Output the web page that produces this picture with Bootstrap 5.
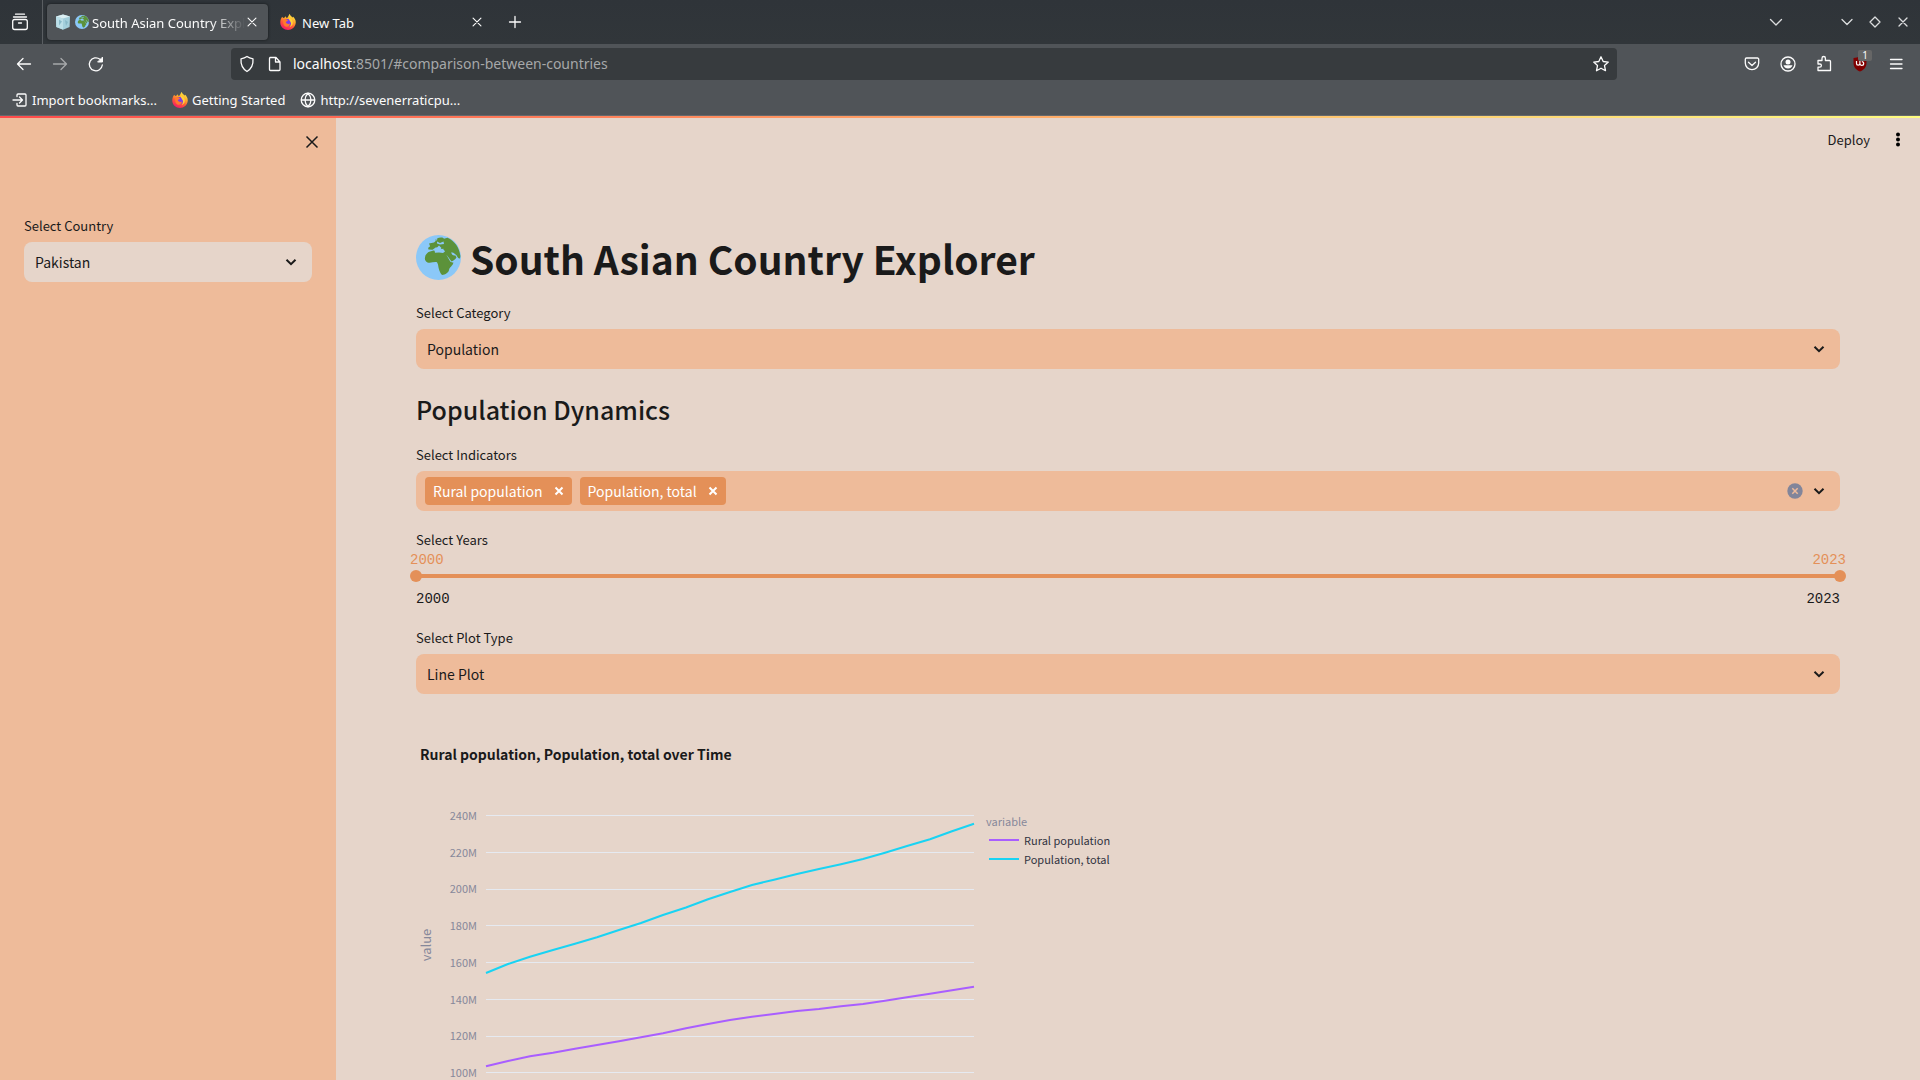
<!DOCTYPE html>
<html lang="en">
<head>
<meta charset="utf-8">
<meta name="viewport" content="width=device-width, initial-scale=1">
<title>South Asian Country Explorer</title>
<link href="https://cdn.jsdelivr.net/npm/bootstrap@5.3.0/dist/css/bootstrap.min.css" rel="stylesheet">
<style>
:root{--panel:#eebb9a;--page:#e6d5ca;--accent:#e49058;--ink:#1a1a1a;--ui:"Noto Sans",sans-serif;--app:"Noto Sans CJK SC","Source Sans Pro",sans-serif}
body{height:100vh;background:var(--page);color:var(--ink);font-family:var(--app);font-size:14px;line-height:20px}
svg{display:block;flex:none}
button.plain{border:0;background:none;padding:0;color:inherit;display:flex;align-items:center;justify-content:center}
.browser{font-family:var(--ui);font-size:13px;color:#fcfcfc}
.browser svg.line{fill:none;stroke:currentColor;stroke-width:1.3;stroke-linecap:round;stroke-linejoin:round}
.tabstrip{height:44px;background:linear-gradient(#2f3439,#31363a)}
.viewtabs{width:43px;border-right:1px solid #5a5e62;padding-left:11px}
.tab-item{height:36px;border-radius:4px;padding:0 9px 0 8px}
.tab-on{width:221px;background:#505458;box-shadow:0 0 3px #15181a;margin:0 4px}
.tab-off{width:221px}
.tab-title{white-space:nowrap;overflow:hidden;line-height:36px;margin:2px 0 0 6px}
.tab-fade{-webkit-mask-image:linear-gradient(to left,transparent,#000 34px);margin-left:3px}
.new-tab{margin-left:13px}
.tab-list{margin-right:53px}
.winctl{color:#dcdedf}
.navrow{height:40px;background:#505458}
.navleft{width:231px;padding-left:14px;gap:16px}
.addr{height:32px;background:#373b3e;border-radius:4px;padding:0 7px 0 8px;gap:10px}
.addr .addr-text{color:#a6a8a9;font-size:14px}
.addr-host{color:#fcfcfc}
.navright{width:303px;padding:0 14px 0 0;gap:16px}
.bookrow{height:32px;background:#505458;border-bottom:1px solid #66696c;padding:0 12px;gap:15px}
.bookrow a{color:inherit;text-decoration:none;gap:4px}
.ub-count{position:absolute;left:8px;top:-4px;background:#666;font-size:10px;line-height:11px;width:14px;border-radius:2px;text-align:center}
.decoration{height:2px;background:linear-gradient(90deg,#ff4b4b,#fffd80)}
.side{width:336px;background:var(--panel);padding:0 24px}
.side-top{height:98px;padding-top:17px;margin-right:-7px}
.main-pad{padding:70px 80px 0}
.topbar{height:44px;padding:0 13px;gap:19px;font-size:13px}
.topbar button{line-height:44px}
.app-label{display:block;font-size:13px;line-height:20px;margin-bottom:6px}
select.app-select,.multi{height:40px;border:0;border-radius:8px;font-size:14px;line-height:24px;color:var(--ink)}
select.app-select{background-color:var(--panel);padding:0 40px 0 11px;background-size:20px 20px;background-position:right 11px center;
background-image:url("data:image/svg+xml,%3Csvg xmlns='http://www.w3.org/2000/svg' viewBox='0 0 20 20'%3E%3Cpath d='M5.5 7.7l4.5 4.4 4.5-4.4' fill='none' stroke='%231a1a1a' stroke-width='2'/%3E%3C/svg%3E")}
.side select.app-select{background-color:var(--page)}
h1.app-title{font-size:39px;line-height:52px;font-weight:700;gap:9px;margin-bottom:19px}
h3.app-sub{font-size:25px;line-height:32px;font-weight:500;margin:24px 0 20px}
.multi{background:var(--panel);padding:0 11px 0 9px;gap:8px}
.multi-tools{gap:6px}
.chip{height:28px;background:var(--accent);border-radius:4px;color:#fff;padding:0 8px;gap:11px}
.mono{font-family:"Liberation Mono",monospace;font-size:14px;line-height:20px}
.yearbox{margin:19px 0}
.years{margin:0 -6px 7px}
.now-values{color:var(--accent)}
.rail{position:relative;height:12px}
.rail::before{content:"";position:absolute;left:6px;right:6px;top:4px;height:4px;background:var(--accent)}
.rail input{position:absolute;left:0;top:0;width:100%;height:12px;margin:0;appearance:none;-webkit-appearance:none;background:none;pointer-events:none}
.rail input::-webkit-slider-thumb{-webkit-appearance:none;width:12px;height:12px;border-radius:50%;background:var(--accent);pointer-events:auto}
.chart{margin-top:16px}
.chart text{font-family:var(--app);font-size:11px;fill:#86889a}
.chart .plot-title{font-size:14px;font-weight:700;fill:var(--ink)}
.chart .axis-name{font-size:13px}
.chart .legend-name{fill:#31333f}
.chart polyline,.chart .key{fill:none;stroke-width:2}
</style>
<script src="https://cdn.jsdelivr.net/npm/bootstrap@5.3.0/dist/js/bootstrap.bundle.min.js"></script>
</head>
<body class="d-flex flex-column overflow-hidden">

<svg width="0" height="0" class="position-absolute" aria-hidden="true">
<defs>
<linearGradient id="flame" x1="0.8" y1="0" x2="0.3" y2="1"><stop offset="0" stop-color="#fff44f"/><stop offset=".35" stop-color="#ffb02a"/><stop offset=".65" stop-color="#ff5a36"/><stop offset="1" stop-color="#f5156c"/></linearGradient>
<symbol id="fox" viewBox="0 0 16 16"><path d="M2.200 2.800C2.600 3.600 3 3.800 3.600 3.900 4.400 3.400 5 3.500 5.200 2.200c.8.6 1.300 1.200 1.600 2C8 3.600 8.400 1.600 9.800-.2c.3 1.900 1.800 2.700 2.800 3.800.5-.1.4-.6.3-1C15 4.500 16 6.600 15.700 9 15.300 13 12 16 8 16S.5 12.900.3 9C.2 6.600.8 4.600 2.200 2.800z" fill="url(#flame)"/><circle cx="7.600" cy="8.600" r="3.600" fill="#7b3bea"/><path d="M9 3.500c2.500 1 4 3 3.800 5.500-.1 2-1.500 3.600-3 4.200 1.300-2 1.700-3.700.6-5.400C9.500 6.400 8.500 5.500 9 3.500z" fill="#ffd23a"/><path d="M3.500 5.500c1.500-.6 3.500-.1 4.500 1-.5.800-1.800.8-2.200 1.700.8 1.700 2.700 2.100 4.300 1.300-.5 2.600-2.600 4-4.700 3C3.500 11.500 2.600 8 3.500 5.500z" fill="#ff7a2c"/></symbol>
<symbol id="earth" viewBox="0 0 45 45"><circle cx="22.500" cy="22.500" r="22.500" fill="#8bc8f8"/><path d="M19.500 6.500c.3-2.500 2.500-4 5.500-4 1.500 0 2.500.3 3 1.200l3.500-1c7 3 12 10 12.800 17.800.2 1 0 2-.4 3-1.500.3-2.400-1.200-3.400-3.200l-2.500-2c-.6-1-1.800-.8-3-.7l1.500 2.500c1.500.7 2 .5 2.600.2l1.400 1.900c-1 2.300-2.800 3-5 4.300l-3.300-4.500-2-2.500 4 7c1 1 2 .9 3.200 1-.5 3.200-4 4.700-4.400 7.500-.3 2.500-3.500 4.700-7 5-2-2-3.500-6-4-10.500l-1-2.300c-3-.6-6 1-9.500.2-2-1-3-2.700-2.500-5 .2-2.300 1.500-4 3.500-5.500l5-1.400 6 1.200 4-.8v-2.200l-4 .6c-1.500 0-1.500-1.500-3.500-2l-3.500 2.500-4-.2c-.8-1.700.2-2.700 1.700-3l-1.200-3 5-1.200 3.500-2.800c-1-.3-1-.6-2 .1z" fill="#5c923a"/><path d="M18.500 15.500l2-2.500 2.500-2.500 2.500 2.500-1 1.500 3.500.5 1 1.500-2 1.500-4-.5-4 .3zM21 6.500l3 1.500 3.500-1.500.5 2.500-4 .5-3-1z" fill="#8bc8f8"/></symbol>
<symbol id="cross" viewBox="0 0 16 16"><path d="M3.500 3.500l9 9m0-9l-9 9"/></symbol>
</defs>
</svg>

<header class="browser">
  <div class="tabstrip d-flex align-items-center">
    <div class="viewtabs d-flex align-items-center align-self-stretch">
      <button class="plain" aria-label="Recent browsing"><svg class="line" width="18" height="18" viewBox="0 0 18 18"><rect x="1.700" y="6.500" width="14.600" height="10" rx="2"/><path d="M2.500 4h13M4.500 1.200h9M7.500 10h3"/></svg></button>
    </div>
    <div class="tab-item tab-on d-flex align-items-center">
      <svg width="16" height="16" viewBox="0 0 16 16"><path d="M1 2.500L8 .5l7 2-.4 10.500L8 15.700 1.300 13z" fill="#a4cfdc"/><path d="M1 2.500L8 4.500l7-2L8 .5z" fill="#dceff3"/><path d="M8 4.500v11L1.300 13 1 2.500z" fill="#bcdfe8"/><path d="M4 5.500l3 2-3 4zM10 6l3 2-2 4z" fill="#88b9c8"/></svg>
      <svg class="ms-1" width="14" height="14"><use href="#earth"/></svg>
      <span class="tab-title tab-fade flex-fill">South Asian Country Explorer</span>
      <button class="plain" aria-label="Close tab"><svg class="line" width="14" height="14"><use href="#cross"/></svg></button>
    </div>
    <div class="tab-item tab-off d-flex align-items-center">
      <svg width="16" height="16"><use href="#fox"/></svg>
      <span class="tab-title flex-fill">New Tab</span>
      <button class="plain" aria-label="Close tab"><svg class="line" width="14" height="14"><use href="#cross"/></svg></button>
    </div>
    <button class="plain new-tab" aria-label="New tab"><svg class="line" width="18" height="18" viewBox="0 0 18 18"><path d="M9 3.500v11M3.500 9h11"/></svg></button>
    <div class="winctl d-flex align-items-center ms-auto pe-2">
      <button class="plain tab-list" aria-label="List all tabs"><svg class="line" width="18" height="18" viewBox="0 0 18 18"><path d="M3.500 6.500L9 12l5.500-5.500"/></svg></button>
      <button class="plain" aria-label="Minimize"><svg class="line" width="18" height="18" viewBox="0 0 18 18"><path d="M4 6.500l5 5 5-5"/></svg></button>
      <button class="plain mx-2 px-1" aria-label="Maximize"><svg class="line" width="14" height="14" viewBox="0 0 14 14"><path d="M7 2l5 5-5 5-5-5z"/></svg></button>
      <button class="plain" aria-label="Close"><svg class="line" width="18" height="18" viewBox="0 0 18 18"><path d="M5 5l8 8m0-8l-8 8"/></svg></button>
    </div>
  </div>

  <nav class="navrow d-flex align-items-center">
    <div class="navleft d-flex align-items-center">
      <button class="plain" aria-label="Back"><svg class="line" width="20" height="20" viewBox="0 0 20 20"><path d="M16.500 10H4m5-5.500L3.500 10 9 15.500"/></svg></button>
      <button class="plain" aria-label="Forward" disabled><svg class="line opacity-50" width="20" height="20" viewBox="0 0 20 20"><path d="M3.500 10H16m-5-5.500l5.500 5.500-5.500 5.500"/></svg></button>
      <button class="plain" aria-label="Reload"><svg class="line" width="20" height="20" viewBox="0 0 20 20"><path d="M16.300 11A6.500 6.500 0 1 1 14 5.300l2 2"/><path d="M16.500 3.500V8H12z" fill="currentColor" stroke-width="1"/></svg></button>
    </div>
    <div class="addr d-flex align-items-center flex-fill">
      <svg class="line" width="16" height="18" viewBox="0 0 16 18"><path d="M8 1.500c2 1.500 4 2 6 2.300.4 5.700-1.500 10-6 12.700C3.500 13.800 1.600 9.500 2 3.800c2-.3 4-.8 6-2.300z"/></svg>
      <svg class="line" width="18" height="18" viewBox="0 0 18 18"><path d="M5 2.500h6L15 7v7.500a1 1 0 0 1-1 1H5.500a1 1 0 0 1-1-1v-11a1 1 0 0 1 1-1zM10.500 2.500V7H15"/></svg>
      <span class="addr-text flex-fill"><span class="addr-host">localhost</span>:8501/#comparison-between-countries</span>
      <button class="plain" aria-label="Bookmark this page"><svg class="line" width="18" height="18" viewBox="0 0 18 18"><path d="M9 1.800l2.200 4.700 5.100.6-3.800 3.500 1 5.100L9 13.200l-4.500 2.500 1-5.100L1.700 7.100l5.100-.6z"/></svg></button>
    </div>
    <div class="navright d-flex align-items-center justify-content-end">
      <button class="plain" aria-label="Pocket"><svg class="line" width="20" height="20" viewBox="0 0 20 20"><path d="M4.500 4h11a1.200 1.200 0 0 1 1.200 1.200V9a6.700 6.700 0 0 1-13.400 0V5.200A1.200 1.200 0 0 1 4.500 4zM6.500 8.200l3.500 3.300 3.500-3.300"/></svg></button>
      <button class="plain" aria-label="Account"><svg class="line" width="20" height="20" viewBox="0 0 20 20"><circle cx="10" cy="10" r="7"/><circle cx="10" cy="8" r="2.500" fill="currentColor" stroke="none"/><path d="M5.500 11.300h9c-.8 2.300-2.400 3.300-4.500 3.300s-3.700-1-4.500-3.300z" fill="currentColor" stroke="none"/></svg></button>
      <button class="plain" aria-label="Extensions"><svg class="line" width="20" height="20" viewBox="0 0 20 20"><path d="M4 10V6.500h4V4.200a1.700 1.700 0 0 1 3.400 0v2.300h4.100a1 1 0 0 1 1 1v9H4v-3.300h1.800a1.600 1.600 0 0 0 0-3.200z"/></svg></button>
      <button class="plain position-relative" aria-label="uBlock Origin"><svg width="20" height="20" viewBox="0 0 20 20"><path d="M10 2c2 1.500 4.500 1.500 6.500 2v5c0 4.500-3 7-6.500 8.500C6.500 16 3.500 13.500 3.500 9V4c2-.5 4.500-.5 6.500-2z" fill="#800000"/><path d="M6.500 7v2.500a1.700 1.700 0 0 0 3.400 0V7m0 2.500a1.900 1.900 0 1 0 1.900-1.900" fill="none" stroke="#fff" stroke-width="1.200"/></svg><span class="ub-count">1</span></button>
      <button class="plain" aria-label="Menu"><svg class="line" width="20" height="20" viewBox="0 0 20 20"><path d="M4.500 5.500h11.500M4.500 10H16M4.500 14.500H16"/></svg></button>
    </div>
  </nav>

  <nav class="bookrow d-flex align-items-center">
    <a href="#" class="d-flex align-items-center"><svg class="line" width="16" height="16" viewBox="0 0 16 16"><path d="M5 4.500V3a1 1 0 0 1 1-1h7a1 1 0 0 1 1 1v10a1 1 0 0 1-1 1H6a1 1 0 0 1-1-1v-1.500M1 8h9M7.500 5l3 3-3 3"/></svg>Import bookmarks...</a>
    <a href="#" class="d-flex align-items-center"><svg width="16" height="16"><use href="#fox"/></svg>Getting Started</a>
    <a href="#" class="d-flex align-items-center"><svg class="line" width="16" height="16" viewBox="0 0 16 16"><circle cx="8" cy="8" r="6.800"/><path d="M1.500 8h13M8 1.200c-4 4-4 9.600 0 13.600M8 1.200c4 4 4 9.600 0 13.600"/></svg>http://sevenerraticpu...</a>
  </nav>
</header>
<div class="decoration"></div>

<div class="d-flex flex-fill overflow-hidden">
  <aside class="side flex-shrink-0">
    <div class="side-top d-flex justify-content-end align-items-start">
      <button class="plain" aria-label="Close sidebar"><svg width="14" height="14" viewBox="0 0 14 14"><path d="M1.500 1.500l11 11m0-11l-11 11" stroke="#1a1a1a" stroke-width="1.500"/></svg></button>
    </div>
    <label class="app-label" for="country">Select Country</label>
    <select class="form-select app-select" id="country"><option>Pakistan</option></select>
  </aside>

  <main class="flex-fill">
    <div class="topbar d-flex justify-content-end align-items-center">
      <button class="plain">Deploy</button>
      <button class="plain" aria-label="Main menu"><svg width="18" height="18" viewBox="0 0 18 18"><circle cx="9" cy="3.500" r="2"/><circle cx="9" cy="8.500" r="2"/><circle cx="9" cy="13.500" r="2"/></svg></button>
    </div>
    <div class="main-pad">
      <h1 class="app-title d-flex align-items-center"><svg width="45" height="45"><use href="#earth"/></svg>South Asian Country Explorer</h1>
      <label class="app-label" for="category">Select Category</label>
      <select class="form-select app-select" id="category"><option>Population</option></select>
      <h3 class="app-sub">Population Dynamics</h3>

      <span class="app-label">Select Indicators</span>
      <div class="multi d-flex align-items-center">
        <span class="chip d-flex align-items-center">Rural population<button class="plain" aria-label="Remove Rural population"><svg width="10" height="10" viewBox="0 0 10 10"><path d="M1.500 1.500l7 7m0-7l-7 7" stroke="#fff" stroke-width="2"/></svg></button></span>
        <span class="chip d-flex align-items-center">Population, total<button class="plain" aria-label="Remove Population, total"><svg width="10" height="10" viewBox="0 0 10 10"><path d="M1.500 1.500l7 7m0-7l-7 7" stroke="#fff" stroke-width="2"/></svg></button></span>
        <div class="multi-tools d-flex align-items-center ms-auto">
          <button class="plain" aria-label="Clear all"><svg width="16" height="16" viewBox="0 0 16 16"><circle cx="8" cy="8" r="7.700" fill="#82859a"/><path d="M5.300 5.300l5.400 5.400m0-5.400l-5.400 5.400" stroke="#efbb9b" stroke-width="1.500"/></svg></button>
          <button class="plain" aria-label="Open indicators"><svg width="20" height="20" viewBox="0 0 20 20"><path d="M5.500 7.700l4.500 4.400 4.500-4.400" fill="none" stroke="#1a1a1a" stroke-width="2"/></svg></button>
        </div>
      </div>

      <div class="yearbox">
        <span class="app-label mb-0">Select Years</span>
        <div class="years">
          <div class="mono now-values d-flex justify-content-between"><span>2000</span><span>2023</span></div>
          <div class="rail">
            <input type="range" min="2000" max="2023" value="2000" aria-label="First year">
            <input type="range" min="2000" max="2023" value="2023" aria-label="Last year">
          </div>
        </div>
        <div class="mono d-flex justify-content-between"><span>2000</span><span>2023</span></div>
      </div>

      <label class="app-label" for="plot">Select Plot Type</label>
      <select class="form-select app-select" id="plot"><option>Line Plot</option></select>

      <svg class="chart" width="704" height="450" viewBox="0 0 704 450" role="img" aria-label="Rural population and total population over time">
        <text class="plot-title" x="4" y="50">Rural population, Population, total over Time</text>
        <path d="M70 105.500h488M70 142.500h488M70 179.500h488M70 215.500h488M70 252.500h488M70 289.500h488M70 326.500h488M70 362.500h488" stroke="#e6eaf1"/>
        <g text-anchor="end">
          <text x="61" y="110">240M</text>
          <text x="61" y="147">220M</text>
          <text x="61" y="183">200M</text>
          <text x="61" y="220">180M</text>
          <text x="61" y="257">160M</text>
          <text x="61" y="294">140M</text>
          <text x="61" y="330">120M</text>
          <text x="61" y="367">100M</text>
        </g>
        <text class="axis-name" transform="translate(15 235) rotate(-90)" text-anchor="middle">value</text>
        <polyline stroke="#a95eff" points="70,356.300 92,351 114,346.300 137,342.700 159,338.700 181,335 203,331.300 225,327.300 247,323.300 270,318.300 292,314 314,310 336,306.700 358,304 381,301 403,299 425,296.300 447,294 469,290.700 491,287.300 514,283.700 536,280.300 558,276.700"/>
        <polyline stroke="#19d3f3" points="70,263 92,254 114,246.700 137,240 159,233.700 181,227.300 203,220 225,213 247,205 270,197.500 292,189.300 314,182 336,175 358,169.700 381,164 403,159 425,154.200 447,149 469,142.700 491,136 514,129.300 536,121.300 558,113.700"/>
        <text x="570" y="116">variable</text>
        <path class="key" d="M573 130h30" stroke="#a95eff"/>
        <text class="legend-name" x="608" y="135">Rural population</text>
        <path class="key" d="M573 149h30" stroke="#19d3f3"/>
        <text class="legend-name" x="608" y="154">Population, total</text>
      </svg>
    </div>
  </main>
</div>
</body>
</html>
